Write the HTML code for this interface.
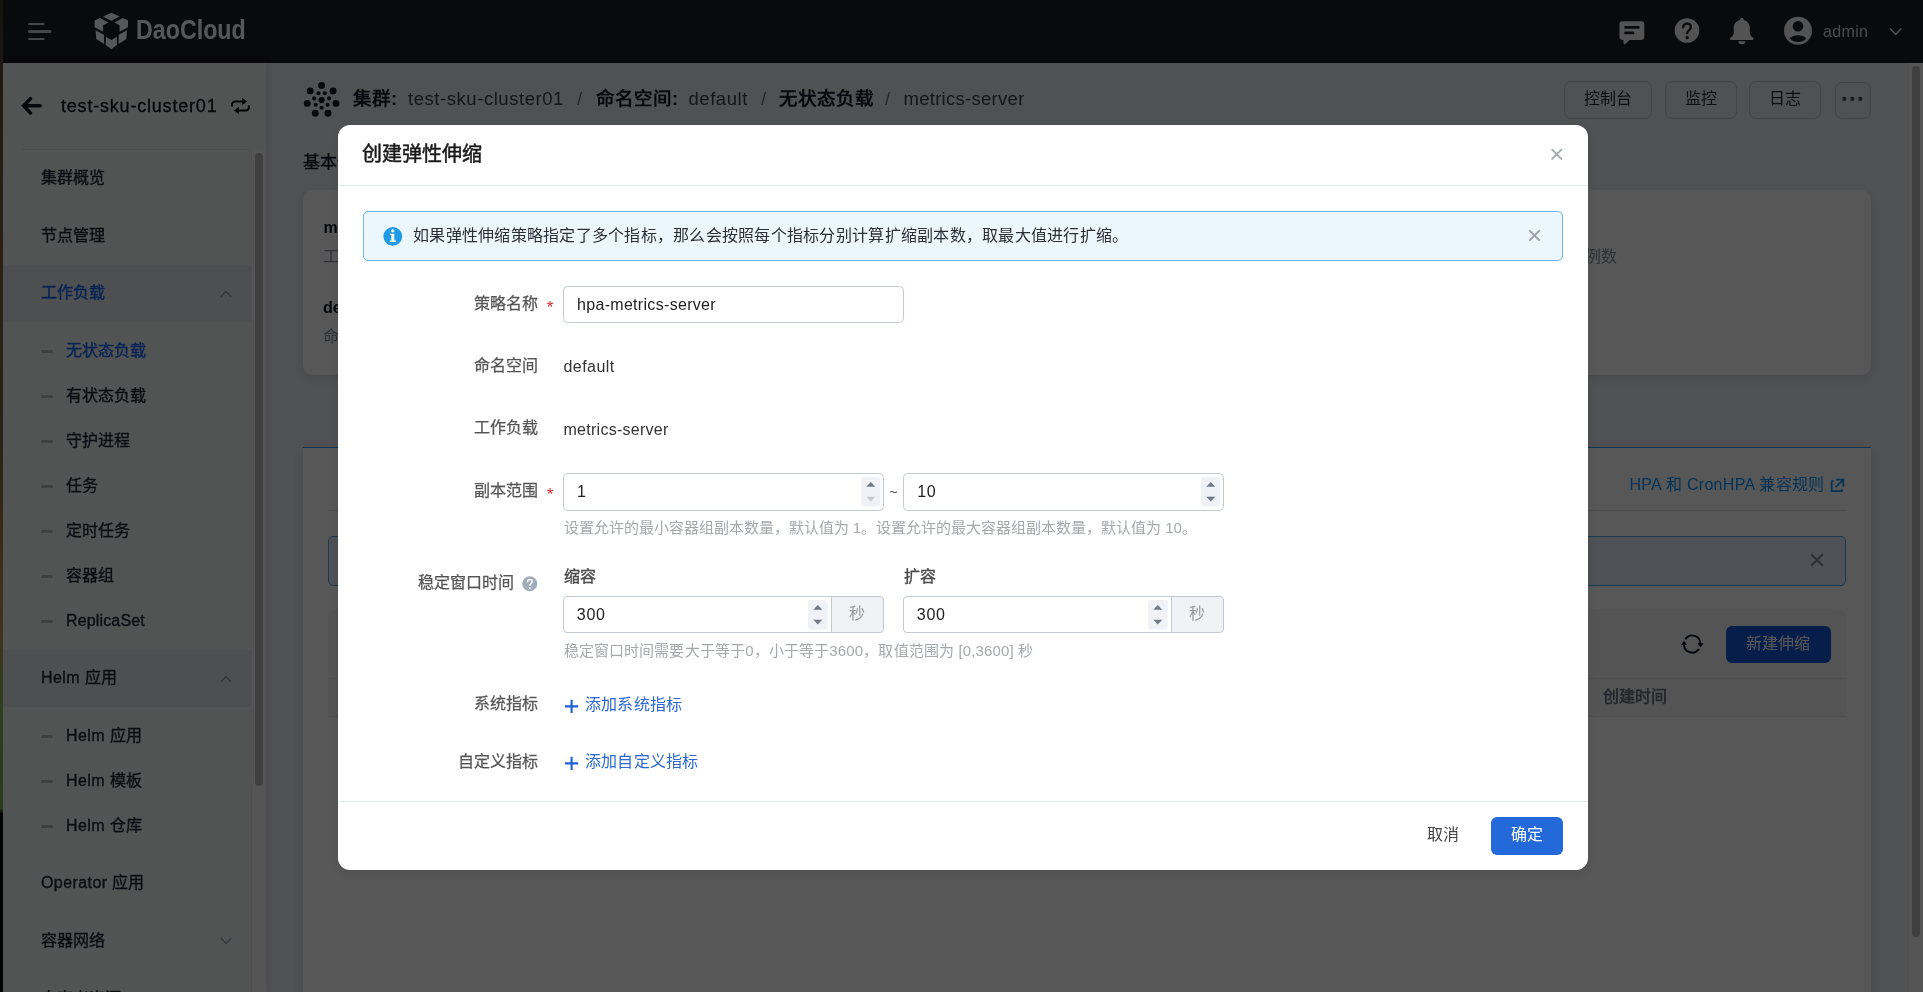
<!DOCTYPE html>
<html lang="zh-CN"><head><meta charset="utf-8"><title>DaoCloud</title>
<style>
*{box-sizing:border-box;margin:0;padding:0}
html,body{width:1923px;height:992px;overflow:hidden;background:#ebedf1}
body{font-family:"Liberation Sans",sans-serif;position:relative;color:#1f2937;will-change:transform}
.t{position:absolute;white-space:nowrap}
.abs{position:absolute}
#app{position:absolute;left:0;top:0;width:1923px;height:992px;overflow:hidden;background:#ebedf1}
#hdr{position:absolute;left:0;top:0;width:1923px;height:62.5px;background:#1c1e24}
#side{position:absolute;left:3px;top:62.5px;width:263px;height:930px;background:#f0f4f3;box-shadow:2px 0 8px rgba(0,0,0,.08)}
#mask{position:absolute;left:0;top:0;width:1923px;height:992px;background:rgba(0,0,0,.66)}
#strip{position:absolute;left:0;top:0;width:3px;height:992px;background:linear-gradient(#14130e 0,#1f1a11 8%,#2c2015 25%,#2a2216 45%,#3c2e19 57%,#40331b 63%,#2d3f1c 72%,#2a3a1a 81.5%,#040404 82%,#040404 100%)}
#modal{position:absolute;left:338px;top:125px;width:1250px;height:745px;background:#fff;border-radius:12px;box-shadow:0 2px 8px rgba(0,0,0,.08)}
.card{position:absolute;background:#fff;border-radius:10px;box-shadow:0 3px 12px rgba(0,0,0,.1)}
.btn{position:absolute;border:1px solid #c6cbd4;border-radius:7px;font-size:16px;color:#1f2937;text-align:center;line-height:34px;height:38px}
.inp{position:absolute;border:1px solid #c3c9d4;border-radius:4.5px;background:#fff;height:37px}
.spin{position:absolute;width:19.5px;height:29.5px;top:3px;background:#f0f2f7;border-radius:3px}
.addon{position:absolute;border:1px solid #c3c9d4;background:#f0f2f6;height:37px;border-radius:0 4px 4px 0;color:#9a9a9a;font-size:16px;text-align:center;line-height:33px}
.l{letter-spacing:.42px}
.dash{position:absolute;left:41px;width:12px;height:3px;background:#b7bdc8;border-radius:1.5px}
</style></head><body>
<div id="app">

<div id="hdr">
<svg class="abs" style="left:26px;top:20px" width="28" height="24" viewBox="26 20 28 24"><g stroke="#c9cacc" stroke-width="2" stroke-linecap="round"><path d="M29 24H43.5M29 39H43.5"/><path d="M29.3 31.5H50.2" stroke-width="2.8"/></g></svg>
<svg class="abs" style="left:92px;top:10px" width="40" height="42" viewBox="92 10 40 42"><g fill="#fff"><polygon points="111.33,12.87 119.68,16.58 111.33,20.75 102.98,16.58"/><polygon points="94.64,20.43 99.83,17.97 108.46,22.38 103.12,25.25 103.12,31.74 94.64,27.24"/><polygon points="128.02,20.43 122.83,17.97 114.21,22.38 119.54,25.25 119.54,31.74 128.02,27.24"/><polygon points="95.66,30.17 103.91,34.66 104.14,44.08 96.26,38.98"/><polygon points="127,30.17 118.75,34.66 118.52,44.08 126.4,38.98"/><polygon points="105.91,36.84 111.33,39.9 116.76,36.84 116.99,45.1 111.33,49.18 105.67,45.1"/></g></svg>
<div class="t" id="logot" style="left:136px;top:11.5px;font-size:27.5px;line-height:36px;font-weight:700;color:#fff;transform-origin:0 50%;transform:scaleX(.845)">DaoCloud</div>
<svg class="abs" style="left:1617px;top:18px" width="30" height="28" viewBox="1617 18 30 28"><rect x="1619.5" y="21.2" width="24.8" height="18.7" rx="2.8" fill="#f2f2f2"/><path d="M1623.3 39h7.4l-5.6 5.2a.9.9 0 0 1-1.5-.6z" fill="#f2f2f2"/><g stroke="#1c1e24" stroke-width="2.6" stroke-linecap="round"><path d="M1625.5 27.4h13M1625.5 32.9h7.6"/></g></svg>
<svg class="abs" style="left:1673px;top:17px" width="28" height="28" viewBox="1673 17 28 28"><circle cx="1687" cy="30.5" r="12.3" fill="#f2f2f2"/><path d="M1683.2 27.3c0-2.2 1.7-3.7 3.9-3.7s3.8 1.4 3.8 3.4c0 3-3.7 3.1-3.7 6.2" fill="none" stroke="#1c1e24" stroke-width="2.4" stroke-linecap="round"/><circle cx="1687.2" cy="37.6" r="1.6" fill="#1c1e24"/></svg>
<svg class="abs" style="left:1728px;top:16px" width="28" height="30" viewBox="1728 16 28 30"><path fill="#f2f2f2" d="M1741.8 17.7c1 0 1.8.8 1.8 1.8v.6c3.6.8 6.2 4 6.2 7.8v4.2c0 1.6.6 3.2 1.8 4.3l1.6 1.5c.8.8.3 2.1-.9 2.1h-21c-1.2 0-1.7-1.3-.9-2.1l1.6-1.5c1.2-1.1 1.8-2.7 1.8-4.3v-4.2c0-3.8 2.6-7 6.2-7.8v-.6c0-1 .8-1.8 1.8-1.8z"/><path fill="#f2f2f2" d="M1738.3 41.3h7a3.5 2.9 0 0 1-7 0z"/></svg>
<svg class="abs" style="left:1783px;top:16px" width="30" height="30" viewBox="1783 16 30 30"><defs><clipPath id="av"><circle cx="1798" cy="30.75" r="11.3"/></clipPath></defs><circle cx="1798" cy="30.75" r="14" fill="#f2f2f2"/><circle cx="1798" cy="26.3" r="5.3" fill="#1c1e24"/><ellipse cx="1798" cy="41.5" rx="9.6" ry="6.2" fill="#1c1e24" clip-path="url(#av)"/></svg>
<div class="t" style="left:1823px;top:19.5px;font-size:16px;line-height:24px;color:#dadada;font-weight:400;letter-spacing:.35px">admin</div>
<svg class="abs" style="left:1888px;top:26px" width="16" height="12" viewBox="1888 26 16 12"><path d="M1890.3 28.7l5.3 5.8 5.3-5.8" fill="none" stroke="#e0e0e0" stroke-width="1.5" stroke-linecap="round" stroke-linejoin="round"/></svg>
</div>
<div id="side"></div>
<div class="abs" style="left:3px;top:265px;width:248.5px;height:57px;background:#e4e7ec"></div>
<div class="abs" style="left:3px;top:650px;width:248.5px;height:57px;background:#e4e7ec"></div>
<div class="abs" style="left:251px;top:150px;width:1px;height:842px;background:#e6e8ec"></div>
<div class="abs" style="left:22px;top:149px;width:225px;height:1px;background:#dcdfe5"></div>
<div class="abs" style="left:251.5px;top:150px;width:14.5px;height:842px;background:#fafafa"></div>
<div class="abs" style="left:255px;top:153px;width:8px;height:633px;border-radius:4px;background:#b8b8b8"></div>
<svg class="abs" style="left:18px;top:94px" width="28" height="24" viewBox="18 94 28 24"><path d="M40.1 105.85H25M30.5 98.7L23.7 105.85L30.5 113" fill="none" stroke="#0f1522" stroke-width="3.5" stroke-linecap="round" stroke-linejoin="miter"/></svg>
<div class="t" id="cname" style="left:61px;top:93px;font-size:18px;line-height:26px;color:#0b0f18;font-weight:400;letter-spacing:.8px;-webkit-text-stroke:.3px #0b0f18">test-sku-cluster01</div>
<svg class="abs" style="left:228px;top:95px" width="24" height="22" viewBox="228 95 24 22"><g fill="none" stroke="#0a0a0a" stroke-width="2.1" stroke-linecap="round"><path d="M232 105.6v-1a3.1 3.1 0 0 1 3.1-3.1H243"/><path d="M248.9 106.4v1a3.1 3.1 0 0 1-3.1 3.1H238"/></g><path d="M242.2 97.9L247.2 101.5L242.2 105.1zM238.9 106.9L233.9 110.5L238.9 114.1z" fill="#0a0a0a"/></svg>
<div class="t" style="left:41px;top:165.5px;font-size:16px;line-height:24px;color:#1b2433;font-weight:400;-webkit-text-stroke:.35px #1b2433;">集群概览</div>
<div class="t" style="left:41px;top:224px;font-size:16px;line-height:24px;color:#1b2433;font-weight:400;-webkit-text-stroke:.35px #1b2433;">节点管理</div>
<div class="t" style="left:41px;top:280.5px;font-size:16px;line-height:24px;color:#1568f5;font-weight:400;-webkit-text-stroke:.35px #1568f5;">工作负载</div>
<svg class="abs" style="left:216.5px;top:286.5px" width="18" height="14" viewBox="216.5 286.5 18 14"><path d="M220.8 296.1l4.7-5 4.7 5" fill="none" stroke="#98a0ae" stroke-width="1.4" stroke-linecap="round" stroke-linejoin="round"/></svg>
<div class="dash" style="top:350px"></div>
<div class="t" style="left:66px;top:339px;font-size:16px;line-height:24px;color:#1568f5;font-weight:400;-webkit-text-stroke:.35px #1568f5;">无状态负载</div>
<div class="dash" style="top:395px"></div>
<div class="t" style="left:66px;top:384px;font-size:16px;line-height:24px;color:#1b2433;font-weight:400;-webkit-text-stroke:.35px #1b2433;">有状态负载</div>
<div class="dash" style="top:440px"></div>
<div class="t" style="left:66px;top:429px;font-size:16px;line-height:24px;color:#1b2433;font-weight:400;-webkit-text-stroke:.35px #1b2433;">守护进程</div>
<div class="dash" style="top:485px"></div>
<div class="t" style="left:66px;top:474px;font-size:16px;line-height:24px;color:#1b2433;font-weight:400;-webkit-text-stroke:.35px #1b2433;">任务</div>
<div class="dash" style="top:530px"></div>
<div class="t" style="left:66px;top:519px;font-size:16px;line-height:24px;color:#1b2433;font-weight:400;-webkit-text-stroke:.35px #1b2433;">定时任务</div>
<div class="dash" style="top:575px"></div>
<div class="t" style="left:66px;top:564px;font-size:16px;line-height:24px;color:#1b2433;font-weight:400;-webkit-text-stroke:.35px #1b2433;">容器组</div>
<div class="dash" style="top:620px"></div>
<div class="t" style="left:66px;top:609px;font-size:16px;line-height:24px;color:#1b2433;font-weight:400;-webkit-text-stroke:.35px #1b2433;"><span class="l" style="letter-spacing:.15px">ReplicaSet</span></div>
<div class="t" style="left:41px;top:665.5px;font-size:16px;line-height:24px;color:#1b2433;font-weight:400;-webkit-text-stroke:.35px #1b2433;"><span class="l">Helm </span>应用</div>
<svg class="abs" style="left:216.5px;top:671.5px" width="18" height="14" viewBox="216.5 671.5 18 14"><path d="M220.8 681.1l4.7-5 4.7 5" fill="none" stroke="#98a0ae" stroke-width="1.4" stroke-linecap="round" stroke-linejoin="round"/></svg>
<div class="dash" style="top:735px"></div>
<div class="t" style="left:66px;top:724px;font-size:16px;line-height:24px;color:#1b2433;font-weight:400;-webkit-text-stroke:.35px #1b2433;"><span class="l">Helm </span>应用</div>
<div class="dash" style="top:780px"></div>
<div class="t" style="left:66px;top:769px;font-size:16px;line-height:24px;color:#1b2433;font-weight:400;-webkit-text-stroke:.35px #1b2433;"><span class="l">Helm </span>模板</div>
<div class="dash" style="top:825px"></div>
<div class="t" style="left:66px;top:814px;font-size:16px;line-height:24px;color:#1b2433;font-weight:400;-webkit-text-stroke:.35px #1b2433;"><span class="l">Helm </span>仓库</div>
<div class="t" style="left:41px;top:870.5px;font-size:16px;line-height:24px;color:#1b2433;font-weight:400;-webkit-text-stroke:.35px #1b2433;"><span class="l">Operator </span>应用</div>
<div class="t" style="left:41px;top:929px;font-size:16px;line-height:24px;color:#1b2433;font-weight:400;-webkit-text-stroke:.35px #1b2433;">容器网络</div>
<svg class="abs" style="left:216.5px;top:933.5px" width="18" height="14" viewBox="216.5 933.5 18 14"><path d="M220.8 937.9l4.7 5 4.7-5" fill="none" stroke="#98a0ae" stroke-width="1.4" stroke-linecap="round" stroke-linejoin="round"/></svg>
<div class="t" style="left:41px;top:986.5px;font-size:16px;line-height:24px;color:#1b2433;font-weight:400;-webkit-text-stroke:.35px #1b2433;">自定义资源</div>
<svg class="abs" style="left:302px;top:80px" width="40" height="40" viewBox="302 80 40 40"><circle cx="321.6" cy="100.1" r="3.1" fill="#111827"/><circle cx="321.6" cy="107.7" r="2.05" fill="#111827"/><circle cx="315.7" cy="104.8" r="2.05" fill="#111827"/><circle cx="314.2" cy="98.4" r="2.05" fill="#111827"/><circle cx="318.4" cy="93.3" r="2.05" fill="#111827"/><circle cx="324.9" cy="93.3" r="2.05" fill="#111827"/><circle cx="329.1" cy="98.4" r="2.05" fill="#111827"/><circle cx="327.6" cy="104.8" r="2.05" fill="#111827"/><circle cx="321.6" cy="85.4" r="3.45" fill="#111827"/><circle cx="333.1" cy="90.9" r="3.45" fill="#111827"/><circle cx="336" cy="103.4" r="3.45" fill="#111827"/><circle cx="328" cy="113.3" r="3.45" fill="#111827"/><circle cx="315.3" cy="113.3" r="3.45" fill="#111827"/><circle cx="307.3" cy="103.4" r="3.45" fill="#111827"/><circle cx="310.2" cy="90.9" r="3.45" fill="#111827"/></svg>
<div class="t" style="left:353px;top:85px;font-size:18.5px;line-height:28px;color:#111827;font-weight:700;">集群:</div>
<div class="t" id="bc1" style="left:408px;top:85px;font-size:18.5px;line-height:28px;color:#394150;font-weight:400;letter-spacing:.55px">test-sku-cluster01</div>
<div class="t" style="left:577px;top:85px;font-size:18.5px;line-height:28px;color:#6b7280;font-weight:400;">/</div>
<div class="t" style="left:596px;top:85px;font-size:18.5px;line-height:28px;color:#111827;font-weight:700;">命名空间:</div>
<div class="t" id="bc2" style="left:688.5px;top:85px;font-size:18.5px;line-height:28px;color:#394150;font-weight:400;letter-spacing:.55px">default</div>
<div class="t" style="left:761px;top:85px;font-size:18.5px;line-height:28px;color:#6b7280;font-weight:400;">/</div>
<div class="t" style="left:779px;top:85px;font-size:18.5px;line-height:28px;color:#111827;font-weight:700;">无状态负载</div>
<div class="t" style="left:885px;top:85px;font-size:18.5px;line-height:28px;color:#6b7280;font-weight:400;">/</div>
<div class="t" id="bc3" style="left:903.5px;top:85px;font-size:18.5px;line-height:28px;color:#394150;font-weight:400;letter-spacing:.28px">metrics-server</div>
<div class="btn" style="left:1564px;top:81px;width:87.5px">控制台</div>
<div class="btn" style="left:1665px;top:81px;width:71.5px">监控</div>
<div class="btn" style="left:1749px;top:81px;width:71.5px">日志</div>
<div class="btn" style="left:1834.5px;top:82px;width:36px;height:36.5px"></div>
<svg class="abs" style="left:1840px;top:94px" width="26" height="10" viewBox="1840 94 26 10"><g fill="#4b5563"><circle cx="1844.3" cy="98.9" r="2.1"/><circle cx="1852.3" cy="98.9" r="2.1"/><circle cx="1860.3" cy="98.9" r="2.1"/></g></svg>
<div class="t" style="left:303px;top:149.6px;font-size:17px;line-height:26px;color:#111827;font-weight:400;-webkit-text-stroke:.35px #111827">基本信息</div>
<div class="card" style="left:303px;top:190px;width:1568px;height:185px"></div>
<div class="t" style="left:323.5px;top:215.5px;font-size:16px;line-height:24px;color:#111827;font-weight:700;">metrics-server</div>
<div class="t" style="left:323px;top:244.5px;font-size:16px;line-height:24px;color:#8b919c;font-weight:400;">工作负载名称</div>
<div class="t" style="left:323px;top:296px;font-size:16px;line-height:24px;color:#111827;font-weight:700;">default</div>
<div class="t" style="left:323px;top:325px;font-size:16px;line-height:24px;color:#8b919c;font-weight:400;">命名空间</div>
<div class="t" style="left:1569px;top:245px;font-size:16px;line-height:24px;color:#8b919c;font-weight:400;">实例数</div>
<div class="card" style="left:303px;top:447px;width:1568px;height:600px;border-radius:0"></div>
<div class="abs" style="left:303px;top:447px;width:1568px;height:1px;background:#0a95ff"></div>
<div class="t" style="right:98.5px;top:473px;font-size:16px;line-height:24px;color:#0a95ff;font-weight:400;letter-spacing:.3px">HPA 和 CronHPA 兼容规则</div>
<svg class="abs" style="left:1828px;top:476px" width="18" height="18" viewBox="1828 476 18 18"><g fill="none" stroke="#0a95ff" stroke-width="1.7"><path d="M1833.7 481h-2v10.2h10.3v-2"/><path d="M1836.2 479.6h7.2v7.2M1843.2 479.8L1835.6 487.2"/></g></svg>
<div class="abs" style="left:328px;top:510px;width:1518px;height:1px;background:#dfe2e8"></div>
<div class="abs" style="left:328px;top:536px;width:1518px;height:50px;border:1px solid #4fa8ea;border-radius:5px;background:#e3f1fc"></div>
<svg class="abs" style="left:1810px;top:553px" width="14" height="14" viewBox="1810 553 14 14"><path d="M1811.8 554.8l10.4 10.4M1822.2 554.8l-10.4 10.4" stroke="#7b818c" stroke-width="1.9" stroke-linecap="round"/></svg>
<div class="abs" style="left:328px;top:609px;width:1518px;height:420px;background:#f6f7f9;border-radius:8px 8px 0 0"></div>
<svg class="abs" style="left:1679px;top:631px" width="26" height="26" viewBox="1679 631 26 26"><g fill="none" stroke="#0b1220" stroke-width="1.9" stroke-linecap="round"><path d="M1685.7 638.7A8.2 8.2 0 0 1 1700.4 643.4M1698.65 649.4A8.2 8.2 0 0 1 1684 644.6"/></g><path d="M1697.3 643.3h6.3l-3.15 4.2zM1681 644.9h6l-3-4.1z" fill="#0b1220"/></svg>
<div class="abs" style="left:1726px;top:626px;width:105px;height:37px;border-radius:6px;background:#1757d8;color:#fff;font-size:16px;text-align:center;line-height:35px;text-indent:-2px">新建伸缩</div>
<div class="abs" style="left:328px;top:678px;width:1518px;height:1px;background:#e2e5ea"></div>
<div class="t" style="left:1603px;top:685px;font-size:16px;line-height:24px;color:#6b7280;font-weight:700;">创建时间</div>
<div class="abs" style="left:328px;top:716px;width:1518px;height:1px;background:#e2e5ea"></div>
<div class="abs" style="left:328px;top:717px;width:1518px;height:300px;background:#fff"></div>
<div class="abs" style="left:1908px;top:62.5px;width:15px;height:930px;background:#fafafa;border-left:1px solid #e8e8e8"></div>
<div class="abs" style="left:1912px;top:65.5px;width:8px;height:871.5px;border-radius:4px;background:#b9b9b9"></div>
</div><div id="mask"></div><div id="strip"></div>
<div id="modal"></div>
<div class="t" style="left:362.3px;top:139px;font-size:20px;line-height:30px;color:#1a1a1a;font-weight:400;-webkit-text-stroke:.5px #1a1a1a">创建弹性伸缩</div>
<svg class="abs" style="left:1549px;top:147px" width="16" height="16" viewBox="1549 147 16 16"><path d="M1552.15 149.7l9.2 9.2M1561.35 149.7l-9.2 9.2" stroke="#a3a8b2" stroke-width="1.9" stroke-linecap="round"/></svg>
<div class="abs" style="left:338px;top:185px;width:1250px;height:1px;background:#e3e7ee"></div>
<div class="abs" style="left:363px;top:211px;width:1200px;height:50px;border:1px solid #6db7ee;border-radius:5px;background:#ecf6fd"></div>
<svg class="abs" style="left:382px;top:225px" width="22" height="22" viewBox="382 225 22 22"><circle cx="392.8" cy="236.3" r="9.4" fill="#1f9be8"/><circle cx="392.8" cy="230.8" r="1.6" fill="#fff"/><path d="M389.9 233.7h4.4v6.9h1.7v1.4h-6.2v-1.4h1.5v-5.5h-1.4z" fill="#fff"/></svg>
<div class="t" id="alt" style="left:413px;top:224px;font-size:16px;line-height:24px;color:#2b2f36;font-weight:400;letter-spacing:.26px">如果弹性伸缩策略指定了多个指标，那么会按照每个指标分别计算扩缩副本数，取最大值进行扩缩。</div>
<svg class="abs" style="left:1527px;top:228px" width="14" height="14" viewBox="1527 228 14 14"><path d="M1529.9 230.8l9.2 9.2M1539.1 230.8l-9.2 9.2" stroke="#9da1a9" stroke-width="1.9" stroke-linecap="round"/></svg>
<div class="t" style="right:1385.5px;top:291.5px;font-size:16px;line-height:24px;color:#555555;font-weight:400;-webkit-text-stroke:.25px #555555">策略名称</div>
<div class="t" style="left:546.8px;top:295.5px;font-size:17px;line-height:24px;color:#e5252a;font-weight:400;">*</div>
<div class="inp" style="left:563px;top:286px;width:341px"></div>
<div class="t" id="v1" style="left:577px;top:293px;font-size:16px;line-height:24px;color:#222;font-weight:400;letter-spacing:.31px">hpa-metrics-server</div>
<div class="t" style="right:1385.5px;top:353.5px;font-size:16px;line-height:24px;color:#555555;font-weight:400;-webkit-text-stroke:.25px #555555">命名空间</div>
<div class="t" id="v2" style="left:563.5px;top:355px;font-size:16px;line-height:24px;color:#333;font-weight:400;letter-spacing:.45px">default</div>
<div class="t" style="right:1385.5px;top:416px;font-size:16px;line-height:24px;color:#555555;font-weight:400;-webkit-text-stroke:.25px #555555">工作负载</div>
<div class="t" id="v3" style="left:563.5px;top:417.5px;font-size:16px;line-height:24px;color:#333;font-weight:400;letter-spacing:.27px">metrics-server</div>
<div class="t" style="right:1385.5px;top:478.5px;font-size:16px;line-height:24px;color:#555555;font-weight:400;-webkit-text-stroke:.25px #555555">副本范围</div>
<div class="t" style="left:546.8px;top:482.5px;font-size:17px;line-height:24px;color:#e5252a;font-weight:400;">*</div>
<div class="inp" style="left:563px;top:473px;width:321px;height:37.5px"></div>
<svg class="abs" style="left:861.3px;top:477.2px" width="20" height="30" viewBox="0 0 20 30"><rect width="19.5" height="29.5" rx="3" fill="#f0f2f7"/><path d="M5.3 9.8L9.8 5l4.5 4.8z" fill="#727a88"/><path d="M5.3 19.7L9.8 24.5l4.5-4.8z" fill="#c5cad4"/></svg>
<div class="t" style="left:577px;top:479.5px;font-size:16px;line-height:24px;color:#222;font-weight:400;">1</div>
<div class="t" style="left:889.5px;top:479.5px;font-size:14px;line-height:24px;color:#444;font-weight:400;">~</div>
<div class="inp" style="left:903px;top:473px;width:321px;height:37.5px"></div>
<svg class="abs" style="left:1201.3px;top:477.2px" width="20" height="30" viewBox="0 0 20 30"><rect width="19.5" height="29.5" rx="3" fill="#f0f2f7"/><path d="M5.3 9.8L9.8 5l4.5 4.8z" fill="#727a88"/><path d="M5.3 19.7L9.8 24.5l4.5-4.8z" fill="#727a88"/></svg>
<div class="t" style="left:917.3px;top:479.5px;font-size:16px;line-height:24px;color:#222;font-weight:400;letter-spacing:.6px">10</div>
<div class="t" id="h1" style="left:563.5px;top:516px;font-size:15px;line-height:24px;color:#a5a8ad;font-weight:400;">设置允许的最小容器组副本数量，默认值为 1。设置允许的最大容器组副本数量，默认值为 10。</div>
<div class="t" style="right:1409.5px;top:570.5px;font-size:16px;line-height:24px;color:#555555;font-weight:400;-webkit-text-stroke:.25px #555555">稳定窗口时间</div>
<svg class="abs" style="left:521px;top:575px" width="18" height="18" viewBox="521 575 18 18"><circle cx="529.75" cy="583.75" r="7.5" fill="#a4adbc"/><path d="M527.5 581.8c0-1.4 1-2.3 2.3-2.3s2.3.9 2.3 2.1c0 1.8-2.2 1.9-2.2 3.7" fill="none" stroke="#fff" stroke-width="1.5" stroke-linecap="round"/><circle cx="529.9" cy="588" r="1" fill="#fff"/></svg>
<div class="t" style="left:563.5px;top:564.5px;font-size:16px;line-height:24px;color:#484848;font-weight:400;-webkit-text-stroke:.35px #484848;">缩容</div>
<div class="t" style="left:903.5px;top:564.5px;font-size:16px;line-height:24px;color:#484848;font-weight:400;-webkit-text-stroke:.35px #484848;">扩容</div>
<div class="inp" style="left:563px;top:596px;width:268.5px;height:37px;border-radius:4px 0 0 4px"></div>
<div class="addon" style="left:830.5px;top:596px;width:53.5px">秒</div>
<svg class="abs" style="left:808.3px;top:600px" width="20" height="30" viewBox="0 0 20 30"><rect width="19.5" height="29.5" rx="3" fill="#f0f2f7"/><path d="M5.3 9.8L9.8 5l4.5 4.8z" fill="#727a88"/><path d="M5.3 19.7L9.8 24.5l4.5-4.8z" fill="#727a88"/></svg>
<div class="t" style="left:576.8px;top:602.5px;font-size:16px;line-height:24px;color:#222;font-weight:400;letter-spacing:.7px">300</div>
<div class="inp" style="left:903px;top:596px;width:268.5px;height:37px;border-radius:4px 0 0 4px"></div>
<div class="addon" style="left:1170.5px;top:596px;width:53.5px">秒</div>
<svg class="abs" style="left:1148.3px;top:600px" width="20" height="30" viewBox="0 0 20 30"><rect width="19.5" height="29.5" rx="3" fill="#f0f2f7"/><path d="M5.3 9.8L9.8 5l4.5 4.8z" fill="#727a88"/><path d="M5.3 19.7L9.8 24.5l4.5-4.8z" fill="#727a88"/></svg>
<div class="t" style="left:916.8px;top:602.5px;font-size:16px;line-height:24px;color:#222;font-weight:400;letter-spacing:.7px">300</div>
<div class="t" id="h2" style="left:563.5px;top:638.5px;font-size:15px;line-height:24px;color:#a5a8ad;font-weight:400;letter-spacing:.14px">稳定窗口时间需要大于等于0，小于等于3600，取值范围为 [0,3600] 秒</div>
<div class="t" style="right:1385.5px;top:692px;font-size:16px;line-height:24px;color:#555555;font-weight:400;-webkit-text-stroke:.25px #555555">系统指标</div>
<svg class="abs" style="left:562.5px;top:696.5px" width="18" height="18" viewBox="562.5 696.5 18 18"><path d="M571.1 699.3v13.2M564.5 705.9h13.2" stroke="#1f5fd6" stroke-width="2.1"/></svg>
<div class="t" style="left:584.7px;top:692.5px;font-size:16px;line-height:24px;color:#2a69d4;font-weight:400;letter-spacing:.3px">添加系统指标</div>
<div class="t" style="right:1385.5px;top:749.5px;font-size:16px;line-height:24px;color:#555555;font-weight:400;-webkit-text-stroke:.25px #555555">自定义指标</div>
<svg class="abs" style="left:562.5px;top:753.5px" width="18" height="18" viewBox="562.5 753.5 18 18"><path d="M571.1 756.3v13.2M564.5 762.9h13.2" stroke="#1f5fd6" stroke-width="2.1"/></svg>
<div class="t" style="left:584.7px;top:749.5px;font-size:16px;line-height:24px;color:#2a69d4;font-weight:400;letter-spacing:.3px">添加自定义指标</div>
<div class="abs" style="left:338px;top:801px;width:1250px;height:1px;background:#e3e7ee"></div>
<div class="t" style="left:1426.5px;top:822.5px;font-size:16px;line-height:24px;color:#444;font-weight:400;">取消</div>
<div class="abs" style="left:1491px;top:817px;width:72px;height:38px;border-radius:6px;background:#2469da;color:#fff;font-size:16px;text-align:center;line-height:36px">确定</div>
</body></html>
